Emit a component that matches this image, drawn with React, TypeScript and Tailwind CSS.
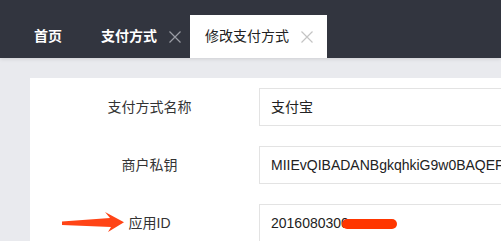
import React from "react";

const XIcon = ({ color }: { color: string }) => (
  <svg width="12" height="12" viewBox="0 0 12 12" className="shrink-0">
    <path d="M0.5 0.5 L11.5 11.5 M11.5 0.5 L0.5 11.5" stroke={color} strokeWidth="1.2" fill="none" />
  </svg>
);

const font = { fontFamily: '"Liberation Sans", "Noto Sans CJK SC", sans-serif' };

export default function App() {
  return (
    <div className="w-[501px] h-[241px] overflow-hidden bg-[#e9eaee]" style={font}>
      <div className="relative z-10 h-[58px] bg-[#32353f] flex items-end pl-[19px] shadow-[0_1px_4px_rgba(0,0,0,0.12)]">
        <div className="h-[43px] px-[15px] flex items-center text-[14px] font-bold text-white">首页</div>
        <div className="h-[43px] ml-[9px] pl-[15px] pr-[9px] flex items-center gap-[12px] text-[14px] font-bold text-white">
          <span>支付方式</span>
          <XIcon color="#9a9ca4" />
        </div>
        <div className="h-[43px] bg-white pl-[15px] pr-[14px] flex items-center gap-[12px] text-[14px] text-[#222]">
          <span>修改支付方式</span>
          <XIcon color="#c4c4c4" />
        </div>
      </div>
      <div className="ml-[30px] mt-[20px] bg-white h-[200px] pt-[10px] flex flex-col gap-[20px]">
        <div className="flex items-center">
          <div className="w-[229px] shrink-0 pl-[10px] text-center text-[14px] text-[#333]">支付方式名称</div>
          <div className="flex-1 h-[38px] border border-[#e3e3e3] border-r-0 pl-[11px] flex items-center text-[14px] text-[#222] whitespace-nowrap overflow-hidden">支付宝</div>
        </div>
        <div className="flex items-center">
          <div className="w-[229px] shrink-0 pl-[10px] text-center text-[14px] text-[#333]">商户私钥</div>
          <div className="flex-1 h-[38px] border border-[#e3e3e3] border-r-0 pl-[11px] flex items-center text-[14px] text-[#222] whitespace-nowrap overflow-hidden">MIIEvQIBADANBgkqhkiG9w0BAQEFAASCBKcwggSjAgEAAoIBAQC</div>
        </div>
        <div className="relative flex items-center">
          <svg className="absolute left-[31px] top-[7px]" width="64" height="22" viewBox="61 211 64 22">
            <path d="M62 221.5 L110 218 L105 212 L124 222.3 L108 232 L111 227 L62 225 Z" fill="#ff4416" />
          </svg>
          <div className="w-[229px] shrink-0 pl-[10px] text-center text-[14px] text-[#333]">应用ID</div>
          <div className="relative flex-1 h-[38px] border border-[#e3e3e3] border-r-0 pl-[11px] flex items-center text-[14px] text-[#222] whitespace-nowrap overflow-hidden">
            2016080300
            <span className="absolute left-[82px] top-[14px] w-[55px] h-[10px] rounded-full bg-[#ff3600]" />
          </div>
        </div>
      </div>
    </div>
  );
}
